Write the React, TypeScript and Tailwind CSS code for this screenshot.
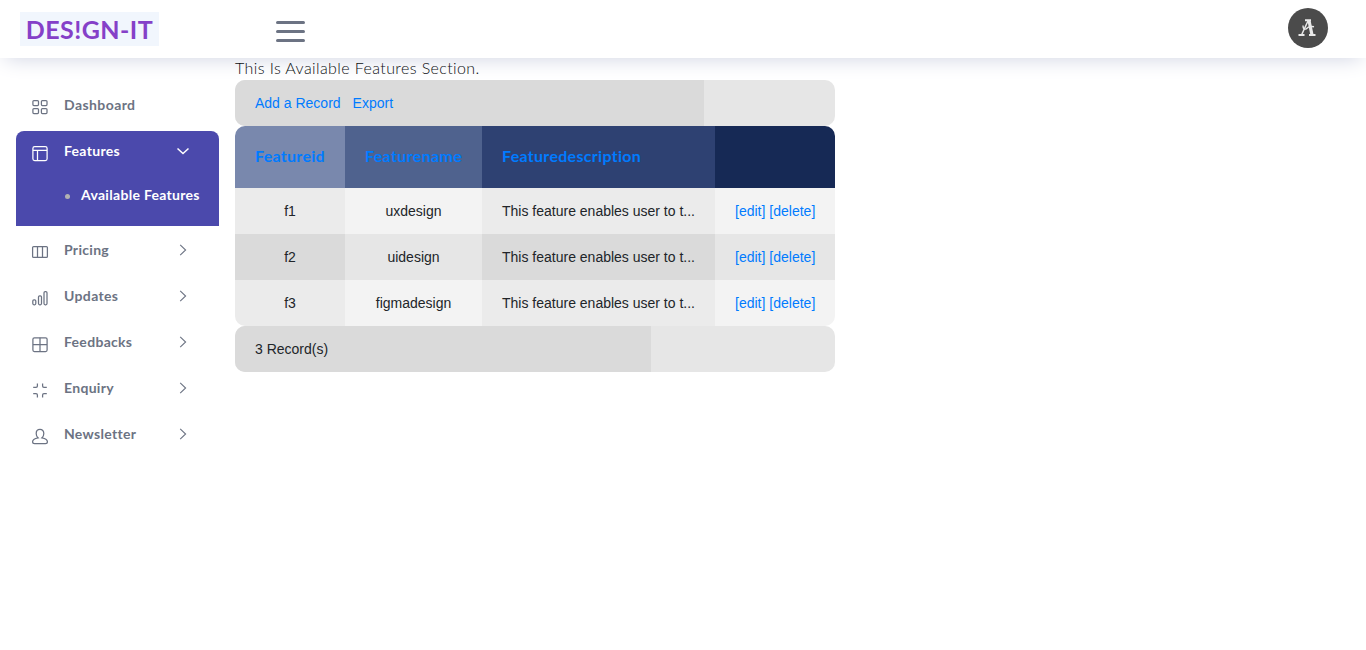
import React from 'react';

type IconName = 'grid' | 'layout' | 'columns' | 'bars' | 'table' | 'contract' | 'user';

const shapes: Record<IconName, React.ReactNode> = {
  grid: (
    <>
      <rect x="0.9" y="1.6" width="5.6" height="5" rx="1" />
      <rect x="9.4" y="1.6" width="5.6" height="5" rx="1" />
      <rect x="0.9" y="9.5" width="5.6" height="5" rx="1" />
      <rect x="9.4" y="9.5" width="5.6" height="5" rx="1" />
    </>
  ),
  layout: (
    <>
      <rect x="0.9" y="1.6" width="14.2" height="14" rx="1.8" />
      <path d="M1 5.4H15M5.5 5.4V15.6" />
    </>
  ),
  columns: (
    <>
      <rect x="0.6" y="2.6" width="14.8" height="10.8" rx="1" />
      <path d="M5.5 2.6V13.4M10.5 2.6V13.4" />
    </>
  ),
  bars: (
    <>
      <rect x="0.8" y="9.8" width="3" height="5" rx="1.2" />
      <rect x="6.5" y="5.8" width="3" height="9" rx="1.2" />
      <rect x="12" y="1.6" width="3" height="13.2" rx="1.2" />
    </>
  ),
  table: (
    <>
      <rect x="0.9" y="1.8" width="14.2" height="13.8" rx="1.5" />
      <path d="M8 1.8V15.6M1 8.7H15" />
    </>
  ),
  contract: <path d="M5.4 1.6V4Q5.4 5.4 4 5.4H1.2M10.6 1.6V4Q10.6 5.4 12 5.4H14.8M5.4 15.4V13Q5.4 11.6 4 11.6H1.2M10.6 15.4V13Q10.6 11.6 12 11.6H14.8" />,
  user: (
    <path d="M8 1.4C5.7 1.4 4.2 3 4.2 5.4C4.2 7.2 4.9 8.9 6 9.8C3 10.3 0.6 11.4 0.6 13.8Q0.6 15.7 2.6 15.7H13.4Q15.4 15.7 15.4 13.8C15.4 11.4 13 10.3 10 9.8C11.1 8.9 11.8 7.2 11.8 5.4C11.8 3 10.3 1.4 8 1.4Z" />
  ),
};

function Icon({ name }: { name: IconName }) {
  return (
    <svg className="mt-1 h-4 w-4 shrink-0 overflow-visible" viewBox="0 0 16 16" fill="none" stroke="currentColor" strokeWidth="1.25">
      {shapes[name]}
    </svg>
  );
}

function Chevron({ open = false }: { open?: boolean }) {
  return (
    <svg className="h-3.5 w-3.5 shrink-0" viewBox="0 0 14 14" fill="none" stroke="currentColor" strokeWidth={open ? 1.5 : 1.1}>
      <path d={open ? 'M1.5 4.5L7 9.5L12.5 4.5' : 'M4.2 1.9L9.6 7L4.2 12.1'} />
    </svg>
  );
}

function NavItem({ icon, label, spacing, arrow = true, open = false }: { icon: IconName; label: string; spacing: string; arrow?: boolean; open?: boolean }) {
  return (
    <a className="flex h-[46px] items-center pr-[29px] pb-1.5 pl-4 text-sm font-bold">
      <Icon name={icon} />
      <span className={`ml-4 flex-1 ${spacing}`}>{label}</span>
      {arrow && <Chevron open={open} />}
    </a>
  );
}

const rows = [
  ['f1', 'uxdesign'],
  ['f2', 'uidesign'],
  ['f3', 'figmadesign'],
];

export default function App() {
  return (
    <div className="min-h-[650px] bg-white font-['Lato',sans-serif] text-[#212529]">
      <header className="relative z-10 flex h-[58px] items-center bg-white shadow-[0_5px_21px_-5px_#cdd1e1]">
        <div className="ml-5 flex h-[34px] w-[139px] items-center justify-center bg-[#f1f6fd] pt-0.5 text-[25px] font-bold tracking-[0.45px] whitespace-nowrap text-[#8540c8]">
          DES!GN-IT
        </div>
        <div className="mt-1 ml-[117px] flex w-[29px] flex-col gap-1.5">
          <span className="h-[3px] rounded-full bg-[#6c7383]" />
          <span className="h-[3px] rounded-full bg-[#6c7383]" />
          <span className="h-[3px] rounded-full bg-[#6c7383]" />
        </div>
        <div className="mr-[38px] mb-0.5 ml-auto flex h-10 w-10 items-center justify-center rounded-full bg-[#4b4b4b]">
          <svg className="mr-0.5 h-5 w-5" viewBox="0 0 20 20" fill="none" stroke="#e9e9e9">
            <path d="M8 2.2H14M1.5 17H7.5M12 17H18.5" strokeWidth="2" />
            <path d="M12 2.5L15 17" strokeWidth="3.2" />
            <path d="M11 3L4.5 17" strokeWidth="1.5" />
            <path d="M6 7.5Q6 11.8 9 11Q12 7.5 17 8.8" strokeWidth="1.4" />
          </svg>
        </div>
      </header>
      <div className="flex">
        <nav className="w-[235px] shrink-0 pt-[27px] pr-4 pl-4 text-[#6c7383]">
          <NavItem icon="grid" label="Dashboard" spacing="tracking-[0.42px]" arrow={false} />
          <div className="mb-1 h-[95px] rounded-t-lg bg-[#4b49ac] text-white">
            <NavItem icon="layout" label="Features" spacing="tracking-[0.3px]" open />
            <a className="flex h-9 items-center pl-[49px] text-sm font-bold whitespace-nowrap">
              <span className="mt-0.5 mr-[11px] h-[5px] w-[5px] rounded-full bg-[#b2b2b2]" />
              <span className="tracking-[0.3px]">Available Features</span>
            </a>
          </div>
          <NavItem icon="columns" label="Pricing" spacing="tracking-[0.3px]" />
          <NavItem icon="bars" label="Updates" spacing="tracking-[0.36px]" />
          <NavItem icon="table" label="Feedbacks" spacing="tracking-[0.3px]" />
          <NavItem icon="contract" label="Enquiry" spacing="tracking-[0.3px]" />
          <NavItem icon="user" label="Newsletter" spacing="tracking-[0.3px]" />
        </nav>
        <main className="w-[600px]">
          <h1 className="relative z-20 h-[22px] text-base leading-5 font-light tracking-[0.4px] whitespace-nowrap text-[#0c0f12]">This Is Available Features Section.</h1>
          <div className="font-['Liberation_Sans',sans-serif] text-sm">
            <div className="relative z-20 flex h-[46px] overflow-hidden rounded-[10px] bg-[#e6e6e6] text-[#007bff]">
              <div className="flex w-[469px] items-center gap-3 bg-[#dadada] pl-5">
                <a>Add a Record</a>
                <a>Export</a>
              </div>
            </div>
            <div className="overflow-hidden rounded-[10px]">
              <div className="grid h-[62px] grid-cols-[110px_137px_233px_120px] font-['Lato',sans-serif] text-base font-bold text-[#007bff]">
                <div className="flex items-center bg-[#7988ad] pb-0.5 pl-5"><span className="tracking-[0.3px]">Featureid</span></div>
                <div className="flex items-center bg-[#4f628e] pb-0.5 pl-5"><span className="tracking-[0.36px]">Featurename</span></div>
                <div className="flex items-center bg-[#2e4172] pb-0.5 pl-5"><span className="tracking-[0.3px]">Featuredescription</span></div>
                <div className="bg-[#162955]" />
              </div>
              {rows.map(([id, name], i) => (
                <div key={id} className="grid h-[46px] grid-cols-[110px_137px_233px_120px]">
                  <div className={`flex items-center justify-center ${i === 1 ? 'bg-[#dadada]' : 'bg-[#ebebeb]'}`}>{id}</div>
                  <div className={`flex items-center justify-center ${i === 1 ? 'bg-[#e6e6e6]' : 'bg-[#f3f3f3]'}`}>{name}</div>
                  <div className={`flex items-center pl-5 ${i === 1 ? 'bg-[#dadada]' : 'bg-[#ebebeb]'}`}>This feature enables user to t...</div>
                  <div className={`flex items-center gap-1 pl-5 text-[#007bff] ${i === 1 ? 'bg-[#e6e6e6]' : 'bg-[#f3f3f3]'}`}>
                    <a>[edit]</a>
                    <a>[delete]</a>
                  </div>
                </div>
              ))}
            </div>
            <div className="flex h-[46px] overflow-hidden rounded-[10px] bg-[#e6e6e6]">
              <div className="flex w-[416px] items-center bg-[#dadada] pl-5">3 Record(s)</div>
            </div>
          </div>
        </main>
      </div>
    </div>
  );
}
